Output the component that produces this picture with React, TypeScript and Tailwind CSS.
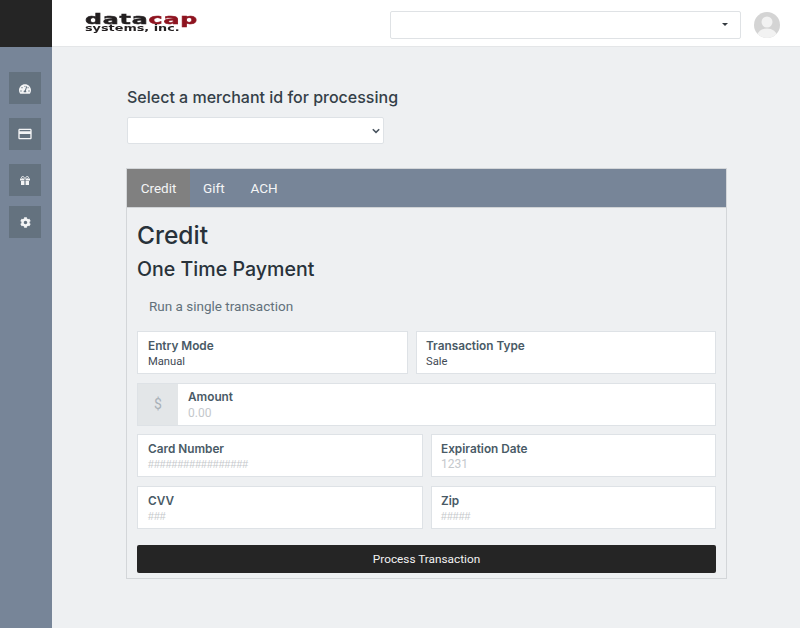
import { FaTachometerAlt, FaCog } from 'react-icons/fa'
import { MdCreditCard } from 'react-icons/md'

const heading = "font-['Inter','Open_Sans',sans-serif]"

function SideButton({ children, className }: { children: React.ReactNode; className: string }) {
  return (
    <div className={`ml-[9px] flex h-8 w-8 items-center justify-center bg-[#64727f] text-[#f3f4f5] ${className}`}>
      {children}
    </div>
  )
}

function Field({
  label,
  value,
  valueClass,
  className,
}: {
  label: string
  value: string
  valueClass: string
  className: string
}) {
  return (
    <div className={`h-[43px] border border-[#dee2e6] bg-white pt-[5px] ${className}`}>
      <div className={`${heading} text-[11.8px] leading-[18px] font-semibold text-[#495a66]`}>{label}</div>
      <div className={`leading-[13px] ${valueClass}`}>{value}</div>
    </div>
  )
}

const hashes = "font-['Liberation_Sans',sans-serif] text-[10.6px] text-[#c4c7ca]"
const plain = 'text-[11.2px] text-[#3f4a55]'

export default function App() {
  return (
    <div className="flex h-[628px] w-[800px] overflow-hidden bg-[#eef0f2] font-['Roboto',sans-serif]">
      {/* Sidebar */}
      <div className="w-[52px] shrink-0 bg-[#778598]">
        <div className="mb-[25px] h-[47px] bg-[#252525]" />
        <SideButton className="mb-[14px]">
          <FaTachometerAlt size={12} className="mt-[2px]" />
        </SideButton>
        <SideButton className="mb-[14px]">
          <MdCreditCard size={16} />
        </SideButton>
        <SideButton className="mb-[10px]">
          <svg width="10" height="9" viewBox="0 0 10 9" fill="currentColor">
            <path d="M5 2.5C4 .8 3 .3 2.2.5 1.3.8 1.4 2 2.4 2.5M5 2.5C6 .8 7 .3 7.8.5 8.7.8 8.6 2 7.6 2.5" fill="none" stroke="currentColor" strokeWidth="1" />
            <rect x="0" y="2.5" width="4.4" height="2" />
            <rect x="5.6" y="2.5" width="4.4" height="2" />
            <rect x="1" y="5" width="3.4" height="4" />
            <rect x="5.6" y="5" width="3.4" height="4" />
          </svg>
        </SideButton>
        <SideButton className="">
          <FaCog size={11} />
        </SideButton>
      </div>

      <div className="flex min-w-0 flex-1 flex-col">
        {/* Header */}
        <div className="flex h-[47px] shrink-0 items-center border-b border-[#e4e6e8] bg-white pt-[3px]">
          <div className="mb-[3px] ml-[33px] w-[112px] font-['DejaVu_Sans',sans-serif] blur-[0.4px]">
            <div className="h-[11px] origin-left scale-x-[1.69] text-[14px] leading-[11px] font-bold tracking-[0.5px] whitespace-nowrap text-[#231f20] [-webkit-text-stroke-width:0.5px]">
              data<span className="text-[#8e1420]">cap</span>
            </div>
            <div className="h-[8px] origin-left scale-x-[1.6] text-[8px] leading-[7px] font-bold whitespace-nowrap text-[#231f20]">
              systems, inc.
            </div>
          </div>
          <div className="ml-[193px] flex h-[28px] w-[351px] items-center justify-end rounded-[2px] border border-[#dfe2e5] bg-white pr-[12px]">
            <div className="h-0 w-0 border-x-[3.5px] border-t-[3.5px] border-x-transparent border-t-[#343a40]" />
          </div>
          <svg className="ml-[13px]" width="26" height="26" viewBox="0 0 26 26">
            <defs>
              <clipPath id="avatar">
                <circle cx="13" cy="13" r="13" />
              </clipPath>
            </defs>
            <g clipPath="url(#avatar)">
              <rect width="26" height="26" fill="#d4d4d4" />
              <circle cx="13" cy="10" r="5.5" fill="#f2f2f2" />
              <ellipse cx="13" cy="24" rx="10" ry="7.5" fill="#f2f2f2" />
            </g>
          </svg>
        </div>

        {/* Content */}
        <div className="pl-[75px] pr-[74px]">
          <h1 className={`${heading} mt-[40px] text-[16px] leading-[20px] font-medium text-[#343f48]`}>
            Select a merchant id for processing
          </h1>
          <div className="relative mt-[10px] w-[257px]">
            <select className="block h-[27px] w-full appearance-none rounded-[2px] border border-[#dee2e6] bg-white text-[12px]" />
            <svg className="pointer-events-none absolute top-[11px] right-[4px]" width="8" height="6" viewBox="0 0 8 6" fill="none">
              <path d="M.8 1.2 4 4.4 7.2 1.2" stroke="#4a5560" strokeWidth="1.6" />
            </svg>
          </div>

          <div className="-mx-px mt-[24px] h-[411px] border border-[#d3d6d9] pb-[5px]">
            <div className="flex h-[39px] border-b border-[#d0d3d6] bg-[#778598] text-[13.5px] text-[#f4f5f6]">
              <div className="flex w-[63px] items-center justify-center bg-[#808080]">Credit</div>
              <div className="flex items-center pl-[13px]">Gift</div>
              <div className="flex items-center pl-[26px]">ACH</div>
            </div>
            <div className="px-[10px]">
              <h2 className={`${heading} mt-[12px] text-[24.5px] leading-[30px] font-medium text-[#28323a]`}>Credit</h2>
              <h3 className={`${heading} mt-[7px] text-[19.6px] leading-[24px] font-medium text-[#28323a]`}>
                One Time Payment
              </h3>
              <p className="mt-[15px] ml-[12px] text-[13.5px] leading-[20px] text-[#62717b]">Run a single transaction</p>

              <div className="mt-[15px] flex gap-[8px]">
                <Field label="Entry Mode" value="Manual" valueClass={plain} className="w-[271px] pl-[10px]" />
                <Field label="Transaction Type" value="Sale" valueClass={plain} className="flex-1 pl-[9px]" />
              </div>

              <div className="mt-[9px] flex h-[43px] border border-[#dee2e6] bg-white">
                <div className="flex w-[40px] items-center justify-center bg-[#e3e6e8] text-[14px] text-[#a9b1b8]">$</div>
                <div className="pl-[10px] pt-[4px]">
                  <div className={`${heading} text-[11.8px] leading-[18px] font-semibold text-[#495a66]`}>Amount</div>
                  <div className="pt-px text-[12px] leading-[13px] text-[#c4c8cc]">0.00</div>
                </div>
              </div>

              <div className="mt-[8px] flex gap-[8px]">
                <Field label="Card Number" value="#################" valueClass={hashes} className="w-[286px] pl-[10px]" />
                <Field label="Expiration Date" value="1231" valueClass="text-[12px] text-[#c4c8cc]" className="flex-1 pl-[9px]" />
              </div>
              <div className="mt-[9px] flex gap-[8px]">
                <Field label="CVV" value="###" valueClass={hashes} className="w-[286px] pl-[10px]" />
                <Field label="Zip" value="#####" valueClass={hashes} className="flex-1 pl-[9px]" />
              </div>

              <button className="mt-[16px] h-[28px] w-full rounded-[2px] bg-[#252525] pt-px text-[11.8px] text-[#f2f2f2]">
                Process Transaction
              </button>
            </div>
          </div>
        </div>
      </div>
    </div>
  )
}
